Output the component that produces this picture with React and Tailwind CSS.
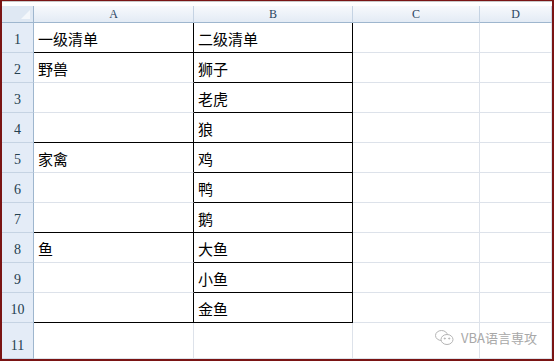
const cols = ['A', 'B', 'C', 'D']

const rows = [
  { n: 1, a: '一级清单', b: '二级清单', aEnd: true },
  { n: 2, a: '野兽', b: '狮子' },
  { n: 3, a: '', b: '老虎' },
  { n: 4, a: '', b: '狼', aEnd: true },
  { n: 5, a: '家禽', b: '鸡' },
  { n: 6, a: '', b: '鸭' },
  { n: 7, a: '', b: '鹅', aEnd: true },
  { n: 8, a: '鱼', b: '大鱼' },
  { n: 9, a: '', b: '小鱼' },
  { n: 10, a: '', b: '金鱼', aEnd: true },
]

const cjk = { fontFamily: '"Noto Sans CJK SC", sans-serif' }
const serif = { fontFamily: '"Liberation Serif", serif' }

function WeChat() {
  return (
    <svg width="21" height="17" viewBox="0 0 21 17" fill="none" stroke="#b5b5b5" strokeWidth="1">
      <ellipse cx="7.5" cy="6.5" rx="6" ry="5" />
      <ellipse cx="13" cy="10.5" rx="6" ry="5" fill="#fff" />
      <circle cx="10.8" cy="9.5" r="0.6" fill="#b5b5b5" />
      <circle cx="15.2" cy="9.5" r="0.6" fill="#b5b5b5" />
    </svg>
  )
}

export default function App() {
  return (
    <div className="w-[554px] h-[361px] overflow-hidden bg-white border-t border-l-2 border-r-2 border-b-2 border-[#7a1414]">
      <div className="relative h-full">
        <div className="h-[5px] border-t border-[#c8c8c8] bg-white" />
        <div className="grid grid-cols-[32px_160px_159px_127px_1fr] grid-rows-[17px_repeat(10,30px)_36px]">
          <div className="relative bg-[#dfe8f3] border-r border-b border-[#9eb6ce]">
            <div className="absolute right-[3px] bottom-[3px] w-0 h-0 border-l-[9px] border-l-transparent border-b-[9px] border-b-[#f4f7fb]" />
          </div>
          {cols.map((c) => (
            <div
              key={c}
              style={serif}
              className="flex items-center justify-center text-[12px] text-[#2a4460] bg-gradient-to-b from-[#f7f9fc] to-[#e3ebf5] border-r border-b border-r-[#c5d3e3] border-b-[#9eb6ce]"
            >
              {c}
            </div>
          ))}
          {rows.map((r) => (
            <Row key={r.n} r={r} />
          ))}
          <div style={serif} className="flex items-end justify-center pb-[2px] text-[14px] text-[#24404f] bg-[#e4ecf7] border-r border-b border-r-[#9eb6ce] border-b-[#c5d3e3]">
            11
          </div>
          <div className="border-r border-b border-[#dde2ea]" />
          <div className="border-r border-b border-[#dde2ea]" />
          <div className="border-r border-b border-[#dde2ea]" />
          <div className="border-r border-b border-[#dde2ea]" />
        </div>
        <div className="absolute left-[432px] top-[327px] flex items-center gap-[6px] text-[13px] text-[#a8a8a8]" style={cjk}>
          <WeChat />
          <span>VBA语言専攻</span>
        </div>
      </div>
    </div>
  )
}

function Row({ r }) {
  return (
    <>
      <div style={serif} className="flex items-end justify-center pb-[2px] text-[14px] text-[#24404f] bg-[#e4ecf7] border-r border-b border-r-[#9eb6ce] border-b-[#c5d3e3]">
        {r.n}
      </div>
      <div
        style={cjk}
        className={`flex items-center pl-[4px] pt-[4px] text-[15px] text-black border-r border-r-black border-b ${r.aEnd ? 'border-b-black' : 'border-b-[#dde2ea]'}`}
      >
        {r.a}
      </div>
      <div style={cjk} className="flex items-center pl-[4px] pt-[4px] text-[15px] text-black border-r border-b border-black">
        {r.b}
      </div>
      <div className="border-r border-b border-[#dde2ea]" />
      <div className="border-r border-b border-[#dde2ea]" />
    </>
  )
}
